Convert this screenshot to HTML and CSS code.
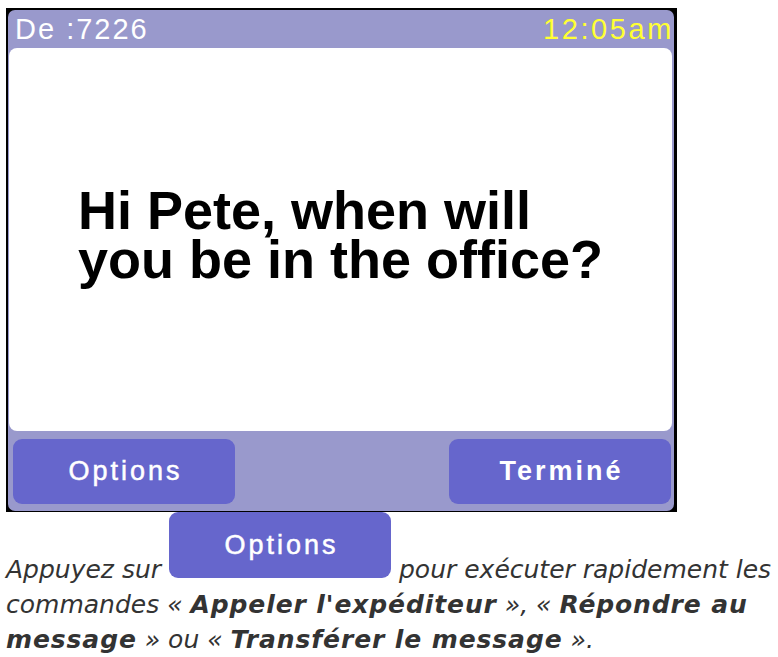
FILE: index.html
```html
<!DOCTYPE html>
<html lang="fr">
<head>
  <meta charset="UTF-8" />
  <title>Message reçu</title>
  <link rel="stylesheet" href="styles.css">
</head>
<body>

<div class="device">
  <div class="panel">
    <!-- Barre du haut -->
    <div class="topbar">
      <span class="from">De :7226</span>
      <span class="clock">12:05am</span>
    </div>

    <!-- Corps du message -->
    <div class="screen">
      <p class="msg">Hi Pete, when will<br>you be in the office?</p>
    </div>

    <!-- Boutons du bas -->
    <div class="actions">
      <div class="softkey">Options</div>
      <div class="softkey bold">Terminé</div>
    </div>
  </div>
</div>

<p class="help">
  Appuyez sur <span class="softkey inline">Options</span> pour exécuter rapidement les
  commandes « <b>Appeler l'expéditeur</b> », « <b>Répondre au message</b> » ou
  « <b>Transférer le message</b> ».
</p>

</body>
</html>
```

FILE: styles.css
```css
* {
  box-sizing: border-box;
}
body {
  margin: 0;
  background: #fff;
  font-family: "Liberation Sans", Arial, sans-serif;
  overflow: hidden;
}

.device {
  width: 671px;
  height: 504px;
  margin: 8px 0 0 6px;
  padding: 2px 3px 1px 2px;
  background: #000;
}

.panel {
  height: 100%;
  background: #9999cc;
  border-radius: 7px;
  display: flex;
  flex-direction: column;
}

.topbar {
  height: 38px;
  display: flex;
  justify-content: space-between;
  align-items: center;
  padding: 0 0 0 7px;
  font-size: 29px;
}
.from {
  color: #fff;
  letter-spacing: 2px;
}
.clock {
  color: #ffff33;
  letter-spacing: 2.6px;
}

.screen {
  flex: 1;
  margin: 0 2px 0 1px;
  background: #fff;
  border-radius: 8px;
  display: flex;
  align-items: center;
  justify-content: center;
}

.msg {
  margin: -10px 0 0;
  font-weight: bold;
  font-size: 54px;
  line-height: 49px;
  color: #000;
}

.actions {
  height: 80px;
  display: flex;
  justify-content: space-between;
  align-items: center;
  padding: 0 3px 0 5px;
}

.softkey {
  width: 222px;
  height: 65px;
  background: #6666cc;
  border-radius: 9px;
  color: #fff;
  font-size: 27px;
  letter-spacing: 3px;
  padding-left: 3px;
  -webkit-text-stroke: 0.5px #fff;
  display: flex;
  align-items: center;
  justify-content: center;
}
.softkey.bold {
  font-weight: bold;
  -webkit-text-stroke: 0;
}

.help {
  margin: 0;
  padding: 0 6px;
  font-family: "DejaVu Sans", Verdana, sans-serif;
  font-style: italic;
  font-size: 25px;
  line-height: 35px;
  color: #333;
}
.help b {
  letter-spacing: 0.9px;
}

/* bouton dans le texte : le bas posé sur la ligne de base */
.softkey.inline {
  display: inline-block;
  overflow: hidden;
  vertical-align: baseline;
  height: 66px;
  line-height: 66px;
  text-align: center;
  font-style: normal;
  font-family: "Liberation Sans", Arial, sans-serif;
}
```
